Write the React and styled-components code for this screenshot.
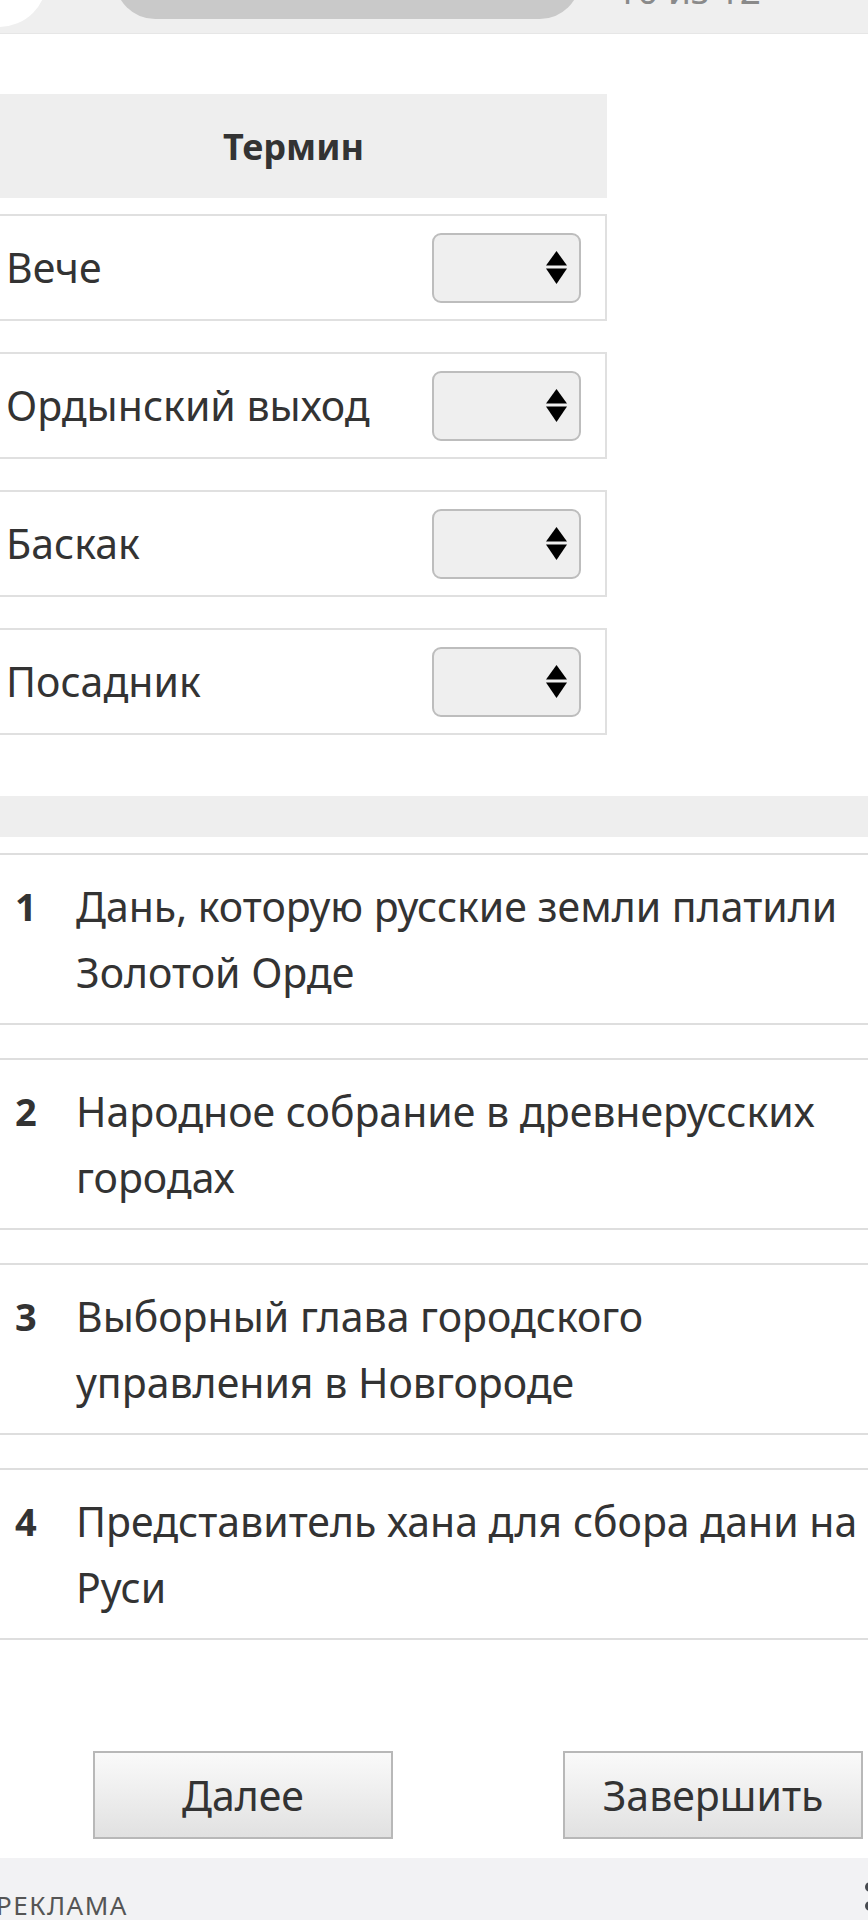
import styled, { createGlobalStyle } from "styled-components";

const GlobalStyle = createGlobalStyle`
  html, body {
    margin: 0;
    padding: 0;
    background: #ffffff;
    overflow-x: hidden;
  }
  body {
    font-family: "Noto Sans", "Open Sans", sans-serif;
    color: #333333;
  }
`;

const Page = styled.div`
  display: flex;
  flex-direction: column;
  width: 868px;
  height: 1920px;
  overflow: hidden;
`;

// quiz header strip (scrolled almost out of view)
const TopBar = styled.div`
  display: flex;
  align-items: flex-end;
  height: 33px;
  flex: none;
  background: #efefef;
  border-bottom: 1px solid #e6e6e6;
  overflow: hidden;
`;

const Avatar = styled.div`
  flex: none;
  width: 96px;
  height: 96px;
  margin: 0 0 6px -49px;
  border-radius: 50%;
  background: #ffffff;
`;

const Progress = styled.div`
  flex: none;
  width: 465px;
  height: 80px;
  margin: 0 0 14px 68px;
  border-radius: 40px;
  background: #c9c9c9;
`;

const Counter = styled.span`
  flex: none;
  margin: 0 0 25px 36px;
  font-size: 37px;
  line-height: 1;
  color: #8a8a8a;
`;

const TermTable = styled.div`
  display: flex;
  flex-direction: column;
  width: 627px;
  margin: 60px 0 0 -20px;
`;

const TermHead = styled.div`
  display: flex;
  align-items: center;
  justify-content: center;
  height: 104px;
  background: #eeeeee;
  font-size: 36px;
  font-weight: 700;
  color: #333333;
`;

const TermList = styled.div`
  display: flex;
  flex-direction: column;
  gap: 31px;
  margin-top: 16px;
`;

const TermRow = styled.div`
  display: flex;
  align-items: center;
  justify-content: space-between;
  box-sizing: border-box;
  height: 107px;
  padding: 0 24px;
  border: 2px solid #e0e0e0;
`;

const TermLabel = styled.span`
  font-size: 41px;
  line-height: 1.2;
  color: #333333;
`;

const SelectBox = styled.div`
  display: flex;
  align-items: center;
  justify-content: flex-end;
  box-sizing: border-box;
  width: 149px;
  height: 70px;
  padding-right: 12px;
  border: 2px solid #bdbdbd;
  border-radius: 9px;
  background: #efefef;
`;

const DefHead = styled.div`
  flex: none;
  height: 41px;
  margin-top: 61px;
  background: #eeeeee;
`;

const DefList = styled.div`
  display: flex;
  flex-direction: column;
  gap: 33px;
  margin-top: 16px;
`;

const DefRow = styled.div`
  display: flex;
  align-items: flex-start;
  width: 900px;
  padding: 18px 0;
  border-top: 2px solid #dedede;
  border-bottom: 2px solid #dedede;
`;

const DefNum = styled.span`
  flex: none;
  box-sizing: border-box;
  width: 76px;
  padding-left: 15px;
  font-size: 38px;
  font-weight: 700;
  line-height: 66px;
  color: #333333;
`;

const DefText = styled.span`
  width: 800px;
  font-size: 41px;
  line-height: 66px;
  color: #333333;
`;

const Actions = styled.div`
  display: flex;
  gap: 170px;
  margin-top: 111px;
  padding-left: 93px;
`;

const Button = styled.button`
  flex: none;
  width: 300px;
  height: 88px;
  padding: 0;
  border: 2px solid #b8b8b8;
  background: linear-gradient(#fafafa, #e1e1e1);
  font-family: "Noto Sans", "Open Sans", sans-serif;
  font-size: 41px;
  color: #333333;
`;

const AdBar = styled.div`
  display: flex;
  align-items: flex-start;
  justify-content: space-between;
  flex: 1;
  margin-top: 19px;
  background: #f2f2f4;
`;

const AdLabel = styled.span`
  margin: 34px 0 0 -4px;
  font-size: 26px;
  line-height: 1;
  letter-spacing: 1.5px;
  text-transform: uppercase;
  color: #555555;
`;

const Kebab = styled.div`
  display: flex;
  flex-direction: column;
  gap: 9px;
  margin: 24px -7px 0 0;
`;

const Dot = styled.span`
  width: 10px;
  height: 10px;
  border-radius: 50%;
  background: #474a50;
`;

const terms = ["Вече", "Ордынский выход", "Баскак", "Посадник"];

const definitions = [
  "Дань, которую русские земли платили Золотой Орде",
  "Народное собрание в древнерусских городах",
  "Выборный глава городского управления в Новгороде",
  "Представитель хана для сбора дани на Руси",
];

const SelectArrows = () => (
  <svg width="21" height="33" viewBox="0 0 21 33">
    <path d="M10.5 0 L21 14.5 L0 14.5 Z" fill="#000" />
    <path d="M0 17.5 L21 17.5 L10.5 33 Z" fill="#000" />
  </svg>
);

const App = () => {
  return (
    <Page>
      <GlobalStyle />
      <TopBar>
        <Avatar />
        <Progress />
        <Counter>10 из 12</Counter>
      </TopBar>

      <TermTable>
        <TermHead>Термин</TermHead>
        <TermList>
          {terms.map((term) => (
            <TermRow key={term}>
              <TermLabel>{term}</TermLabel>
              <SelectBox>
                <SelectArrows />
              </SelectBox>
            </TermRow>
          ))}
        </TermList>
      </TermTable>

      <DefHead />
      <DefList>
        {definitions.map((text, i) => (
          <DefRow key={i}>
            <DefNum>{i + 1}</DefNum>
            <DefText>{text}</DefText>
          </DefRow>
        ))}
      </DefList>

      <Actions>
        <Button>Далее</Button>
        <Button>Завершить</Button>
      </Actions>

      <AdBar>
        <AdLabel>Реклама</AdLabel>
        <Kebab>
          <Dot />
          <Dot />
          <Dot />
        </Kebab>
      </AdBar>
    </Page>
  );
};

export default App;
